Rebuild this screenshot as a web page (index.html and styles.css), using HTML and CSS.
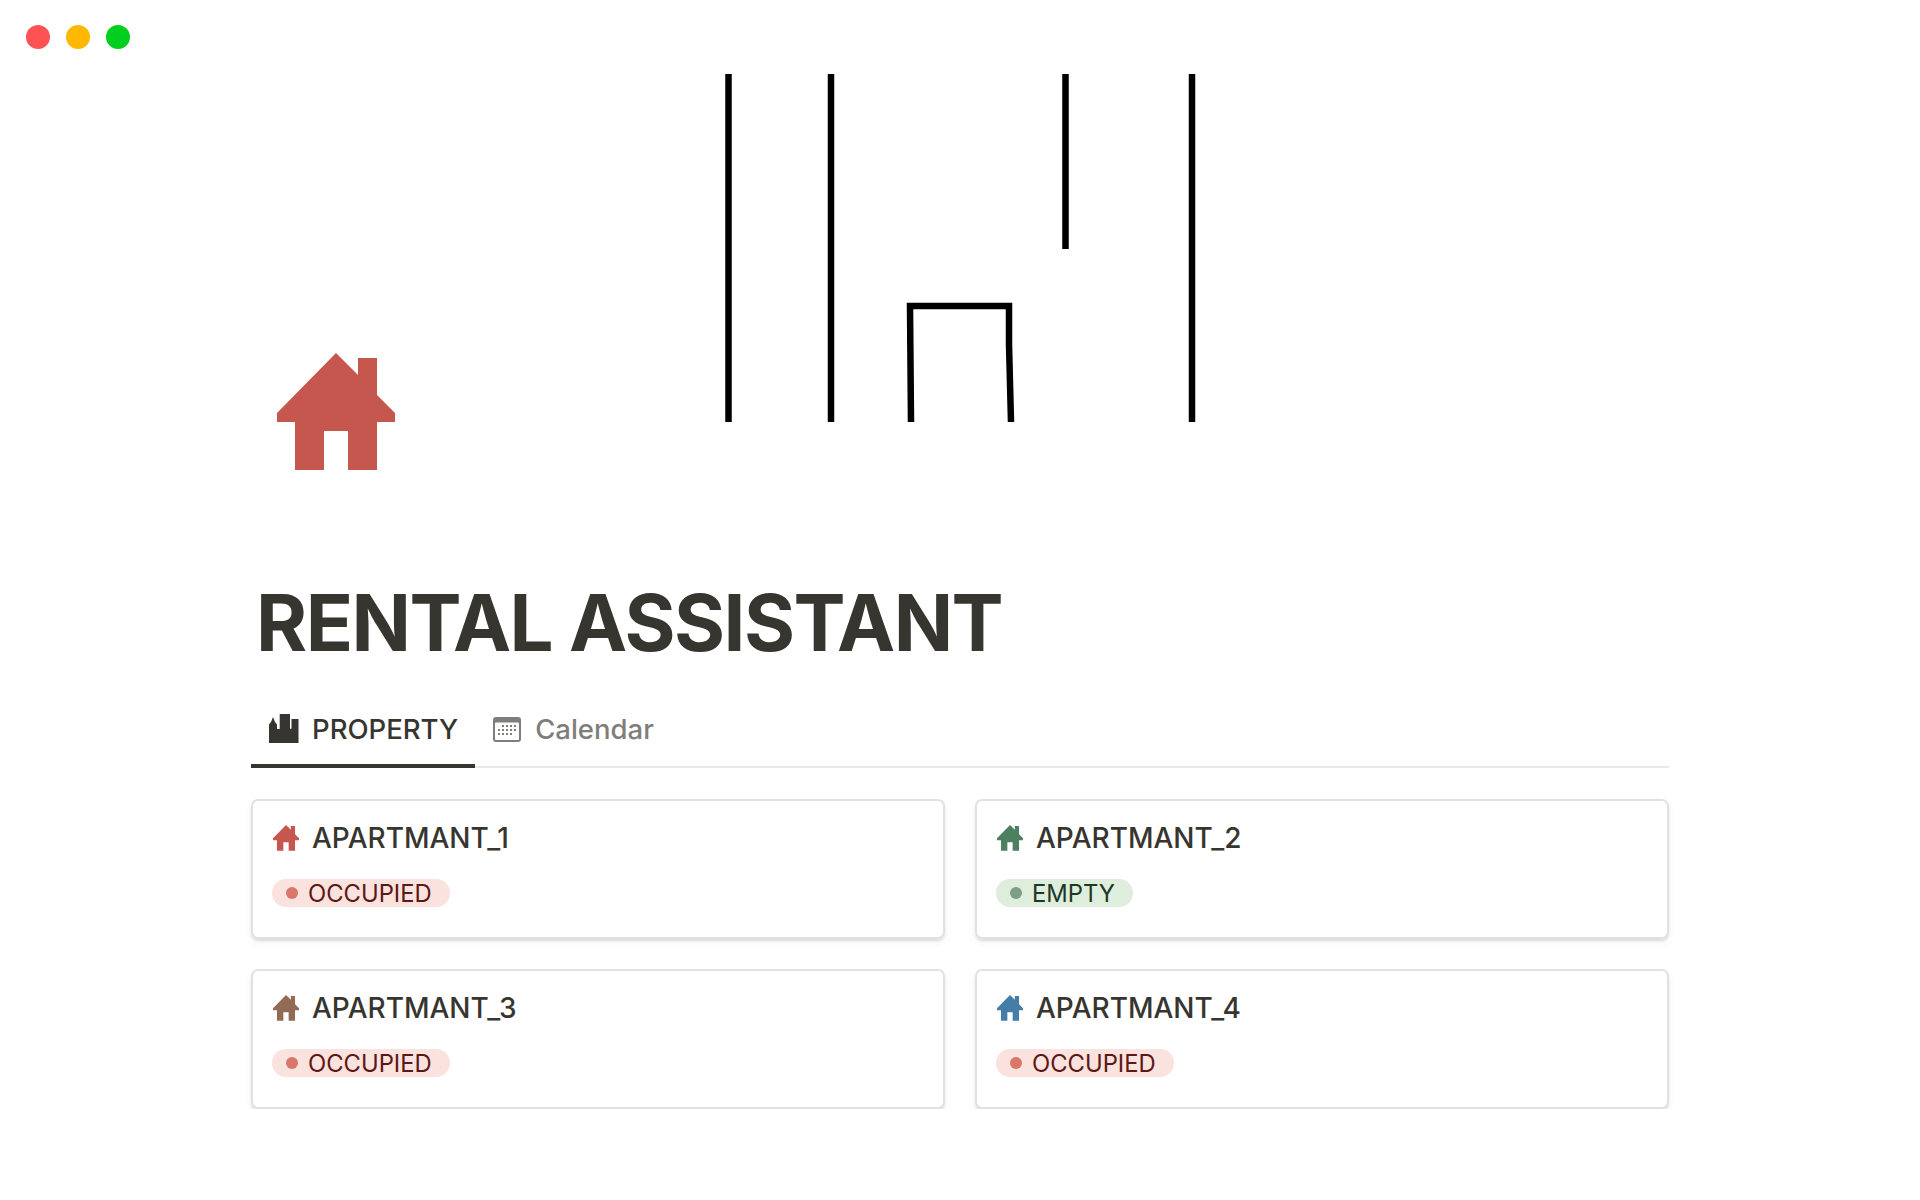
FILE: index.html
```html
<!DOCTYPE html>
<html>
    <head>
        <meta http-equiv="Content-Type" content="text/html; charset=UTF-8">
        <title>Rental Assistant</title>
        <link rel="stylesheet" href="styles.css">
    </head>
    <body>
        <svg width="0" height="0" class="defs">
            <!-- house used by the page icon and the cards -->
            <symbol id="house" viewBox="0 0 118 118">
                <path d="M59 0 L81 22 V5 H100 V42 L118 60 V69 H100 V117 H71 V78 H47 V117 H18 V69 H0 V60 Z"/>
            </symbol>
        </svg>

        <div class="dots">
            <span class="dot red"></span>
            <span class="dot yellow"></span>
            <span class="dot green"></span>
        </div>

        <div class="cover">
            <svg class="cover-art" width="1920" height="348" viewBox="0 0 1920 348">
                <path d="M728.5 0 V348 M831 0 V348 M1065.500 0 V175 M1192 0 V348" stroke="#000" stroke-width="6.500" fill="none"/>
                <path d="M911 348 L910 232 H1009 V270 L1011 348" stroke="#000" stroke-width="6.500" fill="none"/>
            </svg>
            <svg class="page-icon"><use href="#house"/></svg>
        </div>

        <div class="content">
            <h1>RENTAL ASSISTANT</h1>

            <div class="tabs">
                <div class="tab active">
                    <svg class="tab-icon" viewBox="0 0 30 30">
                        <path d="M0 29 V10.500 L2 8 L4 3 L6 8 L8 10.500 V15 H10.700 V0 H21 V14.700 H22.500 V5 H29.500 V29 Z" fill="#37352f"/>
                    </svg>
                    PROPERTY
                </div>
                <div class="tab">
                    <svg class="tab-icon" viewBox="0 0 30 30">
                        <rect x="1" y="3" width="28" height="25" rx="3" fill="#7f7e7a"/>
                        <rect x="3" y="8.500" width="24" height="17.500" rx="1" fill="#fff"/>
                        <g fill="#7f7e7a">
                            <rect x="10" y="11" width="2" height="2"/><rect x="14" y="11" width="2" height="2"/><rect x="18" y="11" width="2" height="2"/><rect x="22" y="11" width="2" height="2"/>
                            <rect x="6" y="15" width="2" height="2"/><rect x="10" y="15" width="2" height="2"/><rect x="14" y="15" width="2" height="2"/><rect x="18" y="15" width="2" height="2"/><rect x="22" y="15" width="2" height="2"/>
                            <rect x="6" y="19" width="2" height="2"/><rect x="10" y="19" width="2" height="2"/><rect x="14" y="19" width="2" height="2"/><rect x="18" y="19" width="2" height="2"/>
                        </g>
                    </svg>
                    Calendar
                </div>
            </div>

            <div class="cards">
                <div class="card">
                    <div class="card-title">
                        <svg class="card-icon icon-red"><use href="#house"/></svg>
                        APARTMANT_1
                    </div>
                    <span class="tag occupied"><i></i>OCCUPIED</span>
                </div>
                <div class="card">
                    <div class="card-title">
                        <svg class="card-icon icon-green"><use href="#house"/></svg>
                        APARTMANT_2
                    </div>
                    <span class="tag empty"><i></i>EMPTY</span>
                </div>
                <div class="card">
                    <div class="card-title">
                        <svg class="card-icon icon-brown"><use href="#house"/></svg>
                        APARTMANT_3
                    </div>
                    <span class="tag occupied"><i></i>OCCUPIED</span>
                </div>
                <div class="card">
                    <div class="card-title">
                        <svg class="card-icon icon-blue"><use href="#house"/></svg>
                        APARTMANT_4
                    </div>
                    <span class="tag occupied"><i></i>OCCUPIED</span>
                </div>
            </div>
        </div>
    </body>
</html>
```

FILE: styles.css
```css
body {
    margin: 0;
    background-color: #fff;
    color: #37352f;
    font-family: Inter, "Liberation Sans", sans-serif;
}
.defs {
    position: absolute;
}

/* Window buttons */
.dots {
    display: flex;
    gap: 16px;
    padding: 25px 0 0 26px;
    height: 49px;
}
.dot {
    width: 24px;
    height: 24px;
    border-radius: 50%;
}
.red { background-color: #ff5254; }
.yellow { background-color: #ffb800; }
.green { background-color: #00cf1f; }

/* Cover */
.cover {
    position: relative;
    height: 350px;
}
.cover-art {
    display: block;
    filter: blur(0.6px);
}
.page-icon {
    position: absolute;
    left: 277px;
    top: 279px;
    width: 118px;
    height: 118px;
    fill: #c5574f;
}

.content {
    margin-left: 251px;
    width: 1418px;
}
h1 {
    margin: 0;
    padding: 152px 0 0 5px;
    font-size: 78px;
    line-height: 94px;
    font-weight: 700;
    letter-spacing: -1.56px;
    color: #37352f;
}

/* Tabs */
.tabs {
    display: flex;
    margin-top: 27px;
    border-bottom: 2px solid #e9e9e7;
    height: 69px;
}
.tab {
    display: flex;
    align-items: center;
    gap: 13px;
    padding: 0 17px 3px 17px;
    box-sizing: border-box;
    height: 71px;
    border-bottom: 4px solid transparent;
    font-size: 27.500px;
    font-weight: 500;
    color: #7f7e7a;
}
.tab.active {
    color: #37352f;
    border-bottom-color: #37352f;
    padding-left: 18px;
}
.tab-icon {
    width: 30px;
    height: 30px;
}

/* Cards */
.cards {
    display: grid;
    grid-template-columns: 1fr 1fr;
    gap: 30px;
    margin-top: 31px;
}
.card {
    height: 140px;
    box-sizing: border-box;
    padding: 18px 20px;
    border: 2px solid #e1e1e0;
    border-radius: 7px;
    box-shadow: 0 2px 2px rgba(15, 15, 15, 0.1), 0 4px 10px rgba(15, 15, 15, 0.05);
}
.card-title {
    display: flex;
    align-items: center;
    gap: 13px;
    height: 38px;
    font-size: 28px;
    font-weight: 500;
}
.card-icon {
    width: 26px;
    height: 26px;
}
.icon-red { fill: #c5574f; }
.icon-green { fill: #4d7f61; }
.icon-brown { fill: #936a53; }
.icon-blue { fill: #447da8; }

.tag {
    display: inline-flex;
    align-items: center;
    gap: 10px;
    margin: 22px 0 0 -1px;
    height: 28px;
    padding: 0 18px 0 14px;
    border-radius: 14px;
    font-size: 23.800px;
}
.tag i {
    width: 12px;
    height: 12px;
    border-radius: 50%;
}
.occupied {
    background-color: #fae2de;
    color: #5d1715;
}
.occupied i {
    background-color: #d9776a;
}
.empty {
    background-color: #dfeddc;
    color: #1c3829;
}
.empty i {
    background-color: #7c9f86;
}
```
